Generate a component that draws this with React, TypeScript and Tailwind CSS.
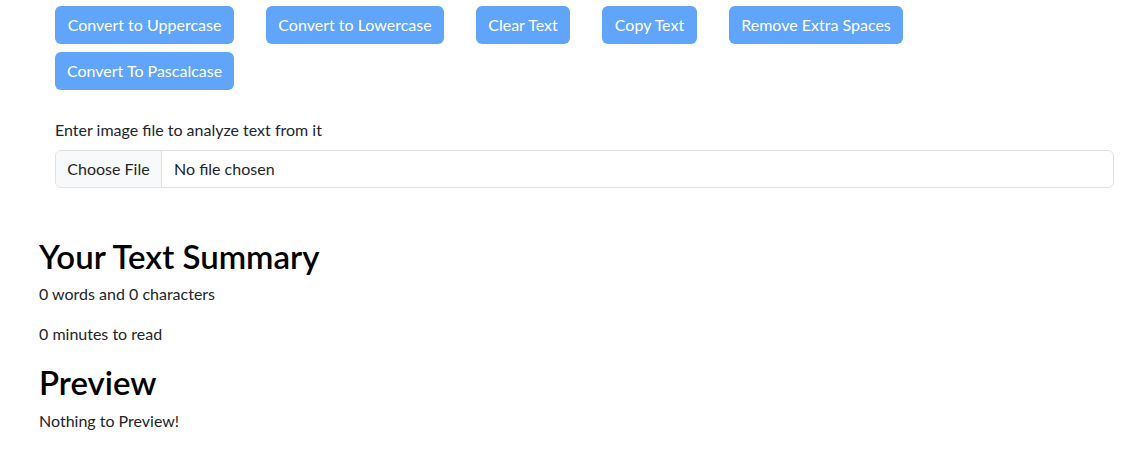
import React from 'react';

const BUTTONS = [
  { label: 'Convert to Uppercase', w: 'w-[179px]' },
  { label: 'Convert to Lowercase', w: 'w-[178px]' },
  { label: 'Clear Text', w: 'w-[94px]' },
  { label: 'Copy Text', w: 'w-[95px]' },
  { label: 'Remove Extra Spaces', w: 'w-[174px]' },
  { label: 'Convert To Pascalcase', w: 'w-[179px]' },
];

export default function App() {
  return (
    <div className="min-h-[461px] bg-white font-['Lato','Noto_Sans',sans-serif] text-[16px] leading-6 text-[#212529]">
      <div className="pl-[39px] pr-4">
        {/* Text actions */}
        <div className="pl-4 pt-[6px]">
          <div className="flex flex-wrap gap-y-2">
            {BUTTONS.map((b) => (
              <button
                key={b.label}
                className={`${b.w} mr-8 h-[38px] whitespace-nowrap rounded-md bg-[#60a5fa] text-center text-white`}
              >
                {b.label}
              </button>
            ))}
          </div>

          <label className="mt-7 mb-2 block">Enter image file to analyze text from it</label>
          <div className="flex h-[38px] items-stretch overflow-hidden rounded-md border border-[#dee2e6]">
            <div className="flex w-[106px] items-center justify-center border-r border-[#dee2e6] bg-[#f8f9fa]">
              Choose File
            </div>
            <div className="flex items-center pl-3">No file chosen</div>
          </div>
        </div>

        {/* Summary */}
        <h2 className="mt-[50px] mb-[6px] text-[33px] leading-[37.7px] font-semibold text-black">Your Text Summary</h2>
        <p className="mb-4">0 words and 0 characters</p>
        <p className="mb-[18px]">0 minutes to read</p>
        <h2 className="mb-2 text-[33px] leading-[37.7px] font-semibold text-black">Preview</h2>
        <p>Nothing to Preview!</p>
      </div>
    </div>
  );
}
